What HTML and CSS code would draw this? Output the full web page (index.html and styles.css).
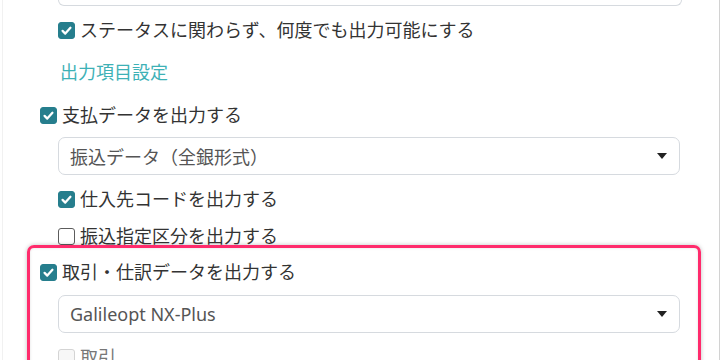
FILE: index.html
```html
<!DOCTYPE html>
<html lang="ja">
<head>
    <meta charset="UTF-8">
    <title>出力設定</title>
    <link rel="stylesheet" href="styles.css">
</head>
<body>

    <div class="page">
        <div class="form">
            <div class="sub">
                <div class="top-field"></div>
                <label class="check row-first">
                    <span class="box checked"><svg viewBox="0 0 16 16"><path d="M3.8 8.4l2.9 2.9 5.5-6.2"/></svg></span>
                    ステータスに関わらず、何度でも出力可能にする
                </label>
                <div class="section-title">出力項目設定</div>
            </div>

            <label class="check row-main">
                <span class="box checked"><svg viewBox="0 0 16 16"><path d="M3.8 8.4l2.9 2.9 5.5-6.2"/></svg></span>
                支払データを出力する
            </label>
            <div class="sub">
                <div class="select first-select">
                    <span>振込データ（全銀形式）</span>
                    <span class="caret"></span>
                </div>
                <label class="check row-sub">
                    <span class="box checked"><svg viewBox="0 0 16 16"><path d="M3.8 8.4l2.9 2.9 5.5-6.2"/></svg></span>
                    仕入先コードを出力する
                </label>
                <label class="check row-sub2">
                    <span class="box"></span>
                    振込指定区分を出力する
                </label>
            </div>

            <div class="group">
                <label class="check row-main">
                    <span class="box checked"><svg viewBox="0 0 16 16"><path d="M3.8 8.4l2.9 2.9 5.5-6.2"/></svg></span>
                    取引・仕訳データを出力する
                </label>
                <div class="sub">
                    <div class="select second-select">
                        <span class="latin">Galileopt NX-Plus</span>
                        <span class="caret"></span>
                    </div>
                    <label class="check row-sub disabled">
                        <span class="box"></span>
                        取引
                    </label>
                </div>
            </div>
        </div>
    </div>

</body>
</html>
```

FILE: styles.css
```css
body {
    margin: 0;
    background: #fff;
    font-family: "Noto Sans", "Noto Sans CJK JP", sans-serif;
    color: #333;
    overflow: hidden;
}
.page {
    margin-left: 2px;
    width: 718px;
    height: 360px;
    box-sizing: border-box;
    border-left: 1px solid #f1f1f1;
    border-right: 1px solid #d2d2d2;
    overflow: hidden;
}
.form {
    padding-left: 37px;
}
.sub {
    margin-left: 18px;
}
.top-field {
    width: 622px;
    height: 5px;
    border: 1px solid #d6dadf;
    border-top: none;
    border-radius: 0 0 7px 7px;
}
.check {
    display: flex;
    align-items: center;
    font-size: 18px;
    line-height: 20px;
    height: 20px;
}
.box {
    width: 15px;
    height: 15px;
    border: 1px solid #5c5c5c;
    border-radius: 3px;
    margin-right: 5px;
    display: flex;
    align-items: center;
    justify-content: center;
    background: #fff;
}
.box.checked {
    background: #267e8d;
    border-color: #267e8d;
}
.box svg {
    width: 15px;
    height: 15px;
}
.box svg path {
    fill: none;
    stroke: #fff;
    stroke-width: 2.4;
    stroke-linecap: round;
    stroke-linejoin: round;
}
.disabled {
    color: #777;
}
.disabled .box {
    border-color: #d4d4d4;
    background: #f7f7f7;
}
.row-first { margin-top: 14px; }
.row-main { margin-top: 23px; }
.row-sub { margin-top: 14px; }
.row-sub2 { margin-top: 17px; }
.section-title {
    margin-top: 22px;
    margin-left: 2px;
    font-size: 18px;
    line-height: 20px;
    color: #3db1b6;
}
.select {
    width: 622px;
    height: 38px;
    box-sizing: border-box;
    border: 1px solid #d6dadf;
    border-radius: 7px;
    display: flex;
    align-items: center;
    justify-content: space-between;
    padding: 0 12px 0 11px;
    font-size: 18px;
    color: #555;
}
.first-select { margin-top: 12px; }
.second-select { margin-top: 13px; }
.latin {
    font-family: "Noto Sans", sans-serif;
    font-size: 18px;
}
.caret {
    width: 0;
    height: 0;
    border-left: 5px solid transparent;
    border-right: 5px solid transparent;
    border-top: 6px solid #222;
}
.group {
    position: relative;
    padding-top: 16px;
}
.group .row-main { margin-top: 0; }
.group::before {
    content: "";
    position: absolute;
    top: -1px;
    left: -13px;
    width: 674px;
    height: 140px;
    box-sizing: border-box;
    border: 3px solid #ff2b6c;
    border-radius: 7px;
    box-shadow: 0 0 4px rgba(0, 0, 0, 0.25), inset 0 0 3px rgba(0, 0, 0, 0.12);
    pointer-events: none;
}
```
